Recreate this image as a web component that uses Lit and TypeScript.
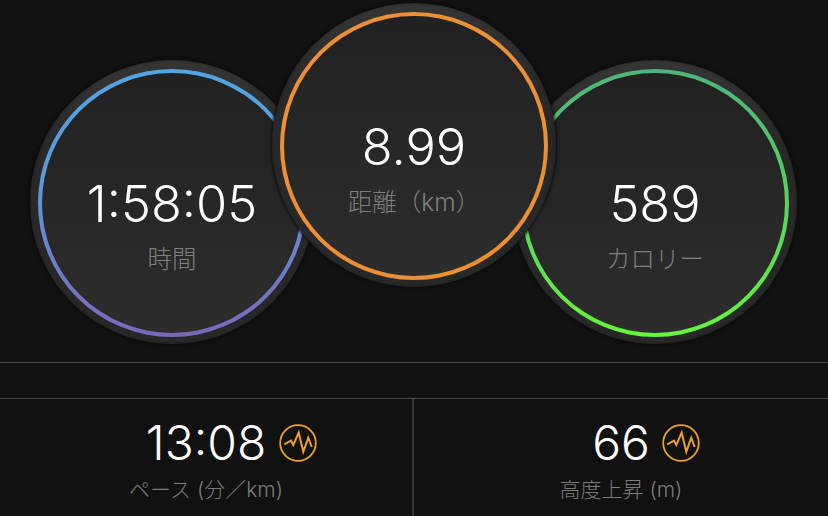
import { LitElement, html, css } from "lit";
import { customElement } from "lit/decorators.js";

const pulse = html`<svg class="pulse" viewBox="0 0 40 40" width="40" height="40" aria-hidden="true">
  <circle cx="20" cy="20" r="17.8" fill="none" stroke="#e8a02e" stroke-width="1.8"></circle>
  <path d="M6.3 21.3 13 17.7 15.3 22 20.7 9.7 25.3 28.7 30.3 14.7 33.7 24" fill="none" stroke="#e8a02e" stroke-width="2" stroke-linejoin="miter"></path>
</svg>`;

@customElement("app-root")
export class AppRoot extends LitElement {
  static styles = css`
    :host {
      display: block;
      width: 828px;
      height: 516px;
      background: #111112;
      overflow: hidden;
      font-family: Inter, "Noto Sans CJK JP", sans-serif;
    }
    .rings {
      display: flex;
      align-items: flex-start;
      height: 358px;
      box-sizing: border-box;
      padding: 3px 0 0 30px;
    }
    .circle {
      flex: none;
      width: 284px;
      height: 284px;
      box-sizing: border-box;
      padding: 9px 8px 7px;
      border-radius: 50%;
      background: linear-gradient(#353535, #292929 30%, #282828);
      box-shadow: 0 0 3px 1px #0a0a0a, inset 0 0 2px #1c1c1c;
    }
    .side { margin-top: 57px; }
    .mid {
      position: relative;
      z-index: 1;
      margin: 0 -43px 0 -42px;
    }
    .ring {
      height: 100%;
      box-sizing: border-box;
      padding: 4px;
      border-radius: 50%;
    }
    .blue { background: linear-gradient(#4fa6e2, #5f96dc 45%, #7a68b9); }
    .orange { background: #ec8f35; }
    .green { background: linear-gradient(#4eb47b, #5bd85a 60%, #66f53a); }
    .face {
      height: 100%;
      box-sizing: border-box;
      padding-top: 102px;
      border-radius: 50%;
      background: linear-gradient(#212121, #2d2d2d);
      display: flex;
      flex-direction: column;
      align-items: center;
    }
    .value {
      font-weight: 300;
      font-size: 50.5px;
      line-height: 58px;
      color: #fff;
    }
    .label {
      margin-top: 10px;
      font-size: 24.5px;
      line-height: 32px;
      font-weight: 300;
      color: #7f7f7f;
    }
    .gap {
      height: 36px;
      box-sizing: border-box;
      border-top: 1px solid #4a4a4a;
      margin-top: 4px;
    }
    .stats {
      display: grid;
      grid-template-columns: 412px 1fr;
      height: 118px;
      border-top: 1px solid #4a4a4a;
    }
    .stat {
      display: flex;
      flex-direction: column;
      align-items: center;
      padding-top: 18px;
      box-sizing: border-box;
    }
    .stat + .stat { border-left: 2px solid #363636; }
    .stat-value {
      position: relative;
      font-weight: 300;
      font-size: 48px;
      line-height: 52px;
      color: #fff;
    }
    .pulse {
      position: absolute;
      left: 100%;
      top: 6px;
      margin-left: 11.5px;
    }
    .stat-label {
      margin-top: 7px;
      font-size: 21px;
      line-height: 28px;
      font-weight: 300;
      color: #7b7b7b;
    }
  `;

  render() {
    return html`
      <div class="rings">
        <div class="circle side"><div class="ring blue"><div class="face">
          <div class="value">1:58:05</div><div class="label">時間</div>
        </div></div></div>
        <div class="circle mid"><div class="ring orange"><div class="face">
          <div class="value">8.99</div><div class="label">距離（km）</div>
        </div></div></div>
        <div class="circle side"><div class="ring green"><div class="face">
          <div class="value">589</div><div class="label">カロリー</div>
        </div></div></div>
      </div>
      <div class="gap"></div>
      <div class="stats">
        <div class="stat">
          <div class="stat-value">13:08${pulse}</div>
          <div class="stat-label">ペース (分／km)</div>
        </div>
        <div class="stat">
          <div class="stat-value">66${pulse}</div>
          <div class="stat-label">高度上昇 (m)</div>
        </div>
      </div>
    `;
  }
}
